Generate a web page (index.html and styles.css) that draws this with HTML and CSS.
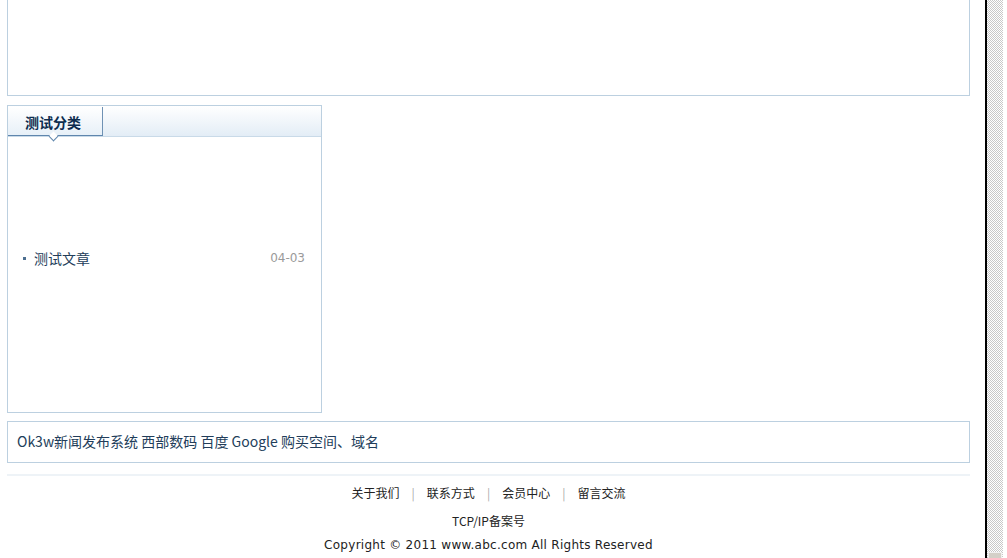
FILE: index.html
```html
<!DOCTYPE html>
<html lang="zh">
<head>
<meta charset="utf-8">
<title>Ok3w</title>
<link rel="stylesheet" href="styles.css">
</head>
<body>
<div class="window">
  <div class="page">
    <div class="top-box"></div>
    <div class="cat-box">
      <div class="cat-head">
        <div class="cat-tab">测试分类<span class="tab-arrow"></span></div>
      </div>
      <ul class="cat-list">
        <li class="cat-item"><span class="dot"></span><a class="cat-link">测试文章</a><span class="date">04-03</span></li>
      </ul>
    </div>
    <div class="links-box">
      <a class="flink">Ok3w新闻发布系统</a> <a class="flink">西部数码</a> <a class="flink">百度</a> <a class="flink">Google</a> <a class="flink">购买空间、域名</a>
    </div>
    <div class="foot-line"></div>
    <div class="footer">
      <div class="foot-nav"><a>关于我们</a><span class="sep">|</span><a>联系方式</a><span class="sep">|</span><a>会员中心</a><span class="sep">|</span><a>留言交流</a></div>
      <div class="foot-icp">TCP/IP备案号</div>
      <div class="foot-copy">Copyright © 2011 www.abc.com All Rights Reserved</div>
    </div>
  </div>
  <div class="frame-line"></div>
  <div class="scrollbar"><div class="thumb"></div></div>
</div>
</body>
</html>
```
FILE: styles.css
```css
html, body {
  margin: 0;
  padding: 0;
  background: #fff;
  height: 100%;
  overflow: hidden;
}
body {
  font-family: "Noto Sans CJK SC", "DejaVu Sans", sans-serif;
  color: #1f3550;
}
.window {
  display: flex;
  height: 558px;
  width: 1007px;
}
.page {
  width: 985px;
  padding-left: 7px;
  box-sizing: border-box;
  flex: none;
}
.top-box {
  width: 963px;
  height: 96px;
  box-sizing: border-box;
  border: 1px solid #bcd0e0;
  border-top: 0;
}
.cat-box {
  margin-top: 9px;
  width: 315px;
  height: 308px;
  box-sizing: border-box;
  border: 1px solid #bcd0e0;
}
.cat-head {
  height: 30px;
  background: linear-gradient(#ffffff, #e3edf6);
  border-bottom: 1px solid #c9dae8;
  display: flex;
}
.cat-tab {
  position: relative;
  width: 95px;
  height: 29px;
  box-sizing: border-box;
  border-right: 1px solid #6f92b4;
  border-bottom: 1px solid #5f86ad;
  margin-top: 1px;
  padding-left: 17px;
  font-size: 14px;
  font-weight: bold;
  line-height: 30px;
  color: #0d2c4e;
  background: linear-gradient(#ffffff, #e7f0f8);
}
.tab-arrow {
  position: absolute;
  left: 42px;
  bottom: -5px;
  width: 6px;
  height: 6px;
  background: #fff;
  border-right: 1px solid #5f86ad;
  border-bottom: 1px solid #5f86ad;
  transform: rotate(45deg);
}
.cat-list {
  list-style: none;
  margin: 0;
  padding: 111px 16px 0 14px;
}
.cat-item {
  display: flex;
  align-items: center;
  height: 20px;
  font-size: 14px;
}
.dot {
  width: 3px;
  height: 3px;
  background: #4d6f90;
  margin-right: 8px;
  margin-left: 1px;
}
.cat-link {
  color: #223d5a;
  flex: 1;
}
.date {
  color: #9a9a9a;
  font-family: "DejaVu Sans", sans-serif;
  font-size: 12px;
}
.links-box {
  margin-top: 8px;
  width: 963px;
  height: 42px;
  box-sizing: border-box;
  border: 1px solid #bcd0e0;
  padding-left: 9px;
  font-size: 14px;
  line-height: 39px;
  color: #223d5a;
}
.flink {
  color: #223d5a;
}
.foot-line {
  margin-top: 11px;
  width: 963px;
  height: 2px;
  background: #eef3f7;
}
.footer {
  width: 963px;
  text-align: center;
  font-size: 12px;
  color: #222;
}
.foot-nav {
  margin-top: 9px;
  line-height: 16px;
}
.foot-nav a {
  color: #222;
}
.sep {
  color: #aaa;
  padding: 0 12px;
}
.foot-icp {
  margin-top: 12px;
  line-height: 16px;
}
.foot-copy {
  margin-top: 8px;
  line-height: 16px;
  letter-spacing: 0.27px;
  font-family: "DejaVu Sans", "Noto Sans CJK SC", sans-serif;
}
.frame-line {
  width: 2px;
  background: #000;
  flex: none;
}
.scrollbar {
  width: 16px;
  flex: none;
  position: relative;
  background: repeating-conic-gradient(#c8c8c8 0 25%, #ffffff 0 50%) 0 0 / 2px 2px;
}
.thumb {
  position: absolute;
  left: 1px;
  right: 1px;
  bottom: 0;
  height: 5px;
  background: #d4d0c8;
  border: 1px solid #f0f0f0;
  border-bottom: 0;
}
```
